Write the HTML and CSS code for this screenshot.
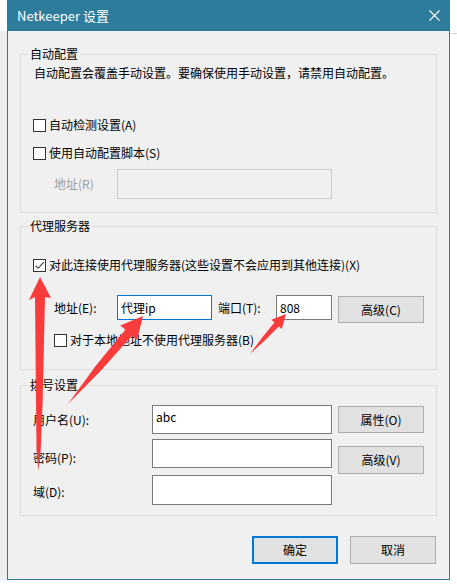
FILE: index.html
```html
<!DOCTYPE html>
<html lang="zh-CN">
<head>
<meta charset="utf-8">
<title>Netkeeper 设置</title>
<link rel="stylesheet" href="styles.css">
</head>
<body>
<div class="desk">
  <div class="strip"></div>
  <div class="window">
    <div class="titlebar">
      <span class="title">Netkeeper 设置</span>
      <svg class="close" width="11" height="11" viewBox="0 0 11 11"><path d="M0.5 0.5 L10.5 10.5 M10.5 0.5 L0.5 10.5" stroke="#fff" stroke-width="1.1" fill="none"/></svg>
    </div>
    <div class="content">
      <div class="group g1">
        <div class="legend">自动配置</div>
        <div class="desc">自动配置会覆盖手动设置。要确保使用手动设置，请禁用自动配置。</div>
        <div class="check-row cb1"><span class="cb"></span><span>自动检测设置(A)</span></div>
        <div class="check-row cb2"><span class="cb"></span><span>使用自动配置脚本(S)</span></div>
        <div class="addr-r">
          <span class="lbl-r">地址(R)</span>
          <div class="edit disabled w-script"></div>
        </div>
      </div>

      <div class="group g2">
        <div class="legend">代理服务器</div>
        <div class="check-row cbx"><span class="cb checked"><svg width="11" height="11" viewBox="0 0 11 11"><path d="M1.5 5.6 L4.2 8.3 L9.8 2.2" stroke="#333" stroke-width="1.1" fill="none"/></svg></span><span>对此连接使用代理服务器(这些设置不会应用到其他连接)(X)</span></div>
        <div class="proxy-row">
          <span class="lbl lbl-e">地址(E):</span>
          <div class="edit focus w-addr">代理ip</div>
          <span class="lbl lbl-t">端口(T):</span>
          <div class="edit w-port">808</div>
          <div class="btn btn-adv">高级(C)</div>
        </div>
        <div class="check-row cb3"><span class="cb"></span><span>对于本地地址不使用代理服务器(B)</span></div>
      </div>

      <div class="group g3">
        <div class="legend">拨号设置</div>
        <div class="dial-row r1">
          <span class="dlbl">用户名(U):</span>
          <div class="edit w-dial">abc</div>
          <div class="btn">属性(O)</div>
        </div>
        <div class="dial-row r2">
          <span class="dlbl">密码(P):</span>
          <div class="edit w-dial"></div>
          <div class="btn">高级(V)</div>
        </div>
        <div class="dial-row r3">
          <span class="dlbl">域(D):</span>
          <div class="edit w-dial"></div>
        </div>
      </div>

      <div class="buttons">
        <div class="btn btn-main default">确定</div>
        <div class="btn btn-main">取消</div>
      </div>
    </div>
  </div>
  <div class="rstrip"></div>

  <svg class="arrows" width="457" height="587" viewBox="0 0 457 587">
    <polygon points="40,277 51,298 45,297 42.7,400 40.7,450 38.3,471 36.5,450 36,400 35,297 29,300"/>
    <polygon points="143,316 137.1,339.8 132.1,335.6 101,370.6 68,404 95.6,366 125.3,329.8 120.3,325.6"/>
    <polygon points="286,314 281.8,329.1 278.8,326.4 264.8,340.5 250,354 261.8,337.9 274.4,322.4 271.4,319.7"/>
  </svg>
</div>
</body>
</html>
```

FILE: styles.css
```css
* { box-sizing: border-box; }

body {
  margin: 0;
  background: #fff;
  font-family: "Noto Sans CJK SC", "Microsoft YaHei UI", sans-serif;
  font-size: 12px;
  line-height: 16px;
  color: #000;
}

.desk {
  position: relative;
  display: flex;
  align-items: flex-start;
  width: 457px;
  height: 587px;
  overflow: hidden;
}

.strip {
  width: 7px;
  height: 549px;
  margin-top: 31px;
  background: #eeeeee;
  flex: none;
}

.rstrip {
  width: 7px;
  height: 1px;
  margin-top: 33px;
  background: #dadada;
  flex: none;
}

.window {
  width: 443px;
  height: 580px;
  flex: none;
  border: 1px solid #2e7c9b;
  border-top: none;
  background: #f0f0f0;
  display: flex;
  flex-direction: column;
}

.titlebar {
  height: 31px;
  background: #2e7c9b;
  color: #fff;
  display: flex;
  align-items: center;
  flex: none;
}

.title {
  padding-left: 9px;
  font-size: 13px;
}

.close {
  margin-left: auto;
  margin-right: 9px;
}

.content {
  padding: 0 12px;
}

.group {
  border: 1px solid #dcdcdc;
}

.legend {
  width: max-content;
  margin: -9px 0 0 7px;
  padding: 0 2px;
  background: #f0f0f0;
  line-height: 16px;
}

.g1 { margin-top: 23px; padding-bottom: 13px; }
.g2 { margin-top: 13px; padding-bottom: 21px; }
.g3 { margin-top: 15px; padding-bottom: 10px; }

.desc { margin: 3px 0 0 13px; }

.check-row {
  display: flex;
  align-items: center;
  height: 16px;
  margin-left: 12px;
}
.cb1 { margin-top: 36px; }
.cb2 { margin-top: 12px; }
.cbx { margin-top: 23px; }
.cb3 { margin-top: 9px; margin-left: 33px; }

.cb {
  width: 13px;
  height: 13px;
  flex: none;
  border: 1px solid #333;
  background: #fff;
  margin-right: 3px;
  display: flex;
  align-items: center;
  justify-content: center;
}

.addr-r {
  display: flex;
  align-items: center;
  height: 30px;
  margin: 8px 0 0 33px;
}
.lbl-r { width: 63px; color: #a0a0a0; }

.edit {
  background: #fff;
  border: 1px solid #7a7a7a;
  padding: 0 3px;
  flex: none;
}
.edit.disabled { background: #f0f0f0; border-color: #cccccc; }
.edit.focus { border-color: #0078d7; }

.w-script { width: 215px; height: 30px; }

.proxy-row {
  display: flex;
  align-items: flex-start;
  height: 28px;
  margin: 22px 0 0 33px;
}
.lbl { line-height: 25px; height: 25px; }
.lbl-e { width: 63px; }
.lbl-t { width: 58px; margin-left: 6px; }
.w-addr { width: 95px; height: 25px; line-height: 23px; }
.w-port { width: 56px; height: 25px; line-height: 23px; }

.btn {
  width: 86px;
  height: 27px;
  background: #e1e1e1;
  border: 1px solid #adadad;
  display: flex;
  align-items: center;
  justify-content: center;
  flex: none;
}
.btn-adv { margin: 1px 0 0 6px; }

.dial-row {
  display: flex;
  align-items: flex-start;
  margin-left: 12px;
}
.dlbl { width: 119px; flex: none; }
.w-dial { width: 180px; padding-top: 3px; }
.dial-row .btn { margin-left: 6px; }

.r1 { margin-top: 12px; height: 34px; }
.r1 .dlbl { margin-top: 7px; }
.r1 .w-dial { height: 29px; }
.r1 .btn { margin-top: 1px; height: 27px; }

.r2 { height: 36px; }
.r2 .dlbl { margin-top: 11px; }
.r2 .w-dial { height: 29px; }
.r2 .btn { margin-top: 7px; height: 28px; }

.r3 { height: 30px; }
.r3 .dlbl { margin-top: 9px; }
.r3 .w-dial { height: 30px; }

.buttons {
  display: flex;
  justify-content: flex-end;
  gap: 12px;
  margin-top: 20px;
  padding-right: 1px;
}
.btn-main { height: 28px; }
.btn.default { border: 2px solid #0078d7; }

.arrows {
  position: absolute;
  left: 0;
  top: 0;
  pointer-events: none;
  fill: #fa3b3b;
}
```
